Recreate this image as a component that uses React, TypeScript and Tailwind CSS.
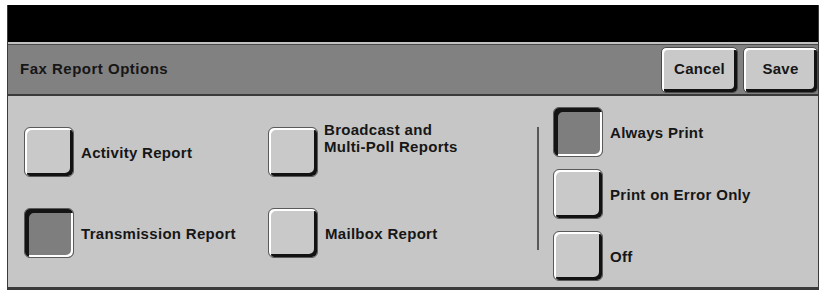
import React from "react";

const font = "font-['Liberation_Sans',Arial,sans-serif] font-bold text-[15px] tracking-[0.3px] text-[#161616]";

function Btn({ selected = false }: { selected?: boolean }) {
  return selected ? (
    <div className="w-[50px] h-[50px] shrink-0 rounded-[6px] bg-[#7e7e7e] border border-[#5a5a5a] shadow-[inset_4px_4px_0_#141414,inset_-2px_-2px_0_#ffffff]" />
  ) : (
    <div className="w-[50px] h-[50px] shrink-0 rounded-[6px] bg-[#c9c9c9] border border-[#5a5a5a] shadow-[inset_2px_2px_0_#ffffff,inset_-3px_-3px_0_#121212]" />
  );
}

function Option({ label, selected = false, children }: { label?: string; selected?: boolean; children?: React.ReactNode }) {
  return (
    <div className="flex items-center h-[50px]">
      <Btn selected={selected} />
      <div className={`${font} ml-[7px] leading-[17px]`}>{children ?? label}</div>
    </div>
  );
}

export default function App() {
  return (
    <div className="w-[823px] h-[293px] bg-white pl-[7px] pt-[5px]">
      <div className="w-[812px] h-[285px] flex flex-col border-x border-[#3a3a3a]">
        <div className="h-[37px] bg-black" />
        <div className="h-[2px] bg-[#c2c2c2]" />
        <div className="h-[1px] bg-[#4a4a4a]" />
        <div className="h-[49px] bg-[#818181] flex items-center justify-between pl-[12px] pr-0">
          <div className={`${font} text-[#1e1e1e] tracking-[0.5px]`}>Fax Report Options</div>
          <div className="flex gap-[5px]">
            <div className={`${font} w-[77px] h-[46px] rounded-[5px] bg-[#c9c9c9] border border-[#4a4a4a] shadow-[inset_2px_2px_0_#ffffff,inset_-3px_-3px_0_#121212] flex items-center justify-center`}>Cancel</div>
            <div className={`${font} w-[75px] h-[46px] rounded-[5px] bg-[#c9c9c9] border border-[#4a4a4a] shadow-[inset_2px_2px_0_#ffffff,inset_-3px_-3px_0_#121212] flex items-center justify-center`}>Save</div>
          </div>
        </div>
        <div className="h-[2px] bg-[#3a3a3a]" />
        <div className="flex-1 bg-[#c6c6c6] border-b-[3px] border-[#3a3a3a] flex items-start pl-[16px]">
          <div className="grid grid-cols-[244px_269px] gap-y-[31px] mt-[31px]">
            <Option label="Activity Report" />
            <div className="flex items-start h-[50px]">
              <Btn />
              <div className={`${font} ml-[6px] leading-[17px] -mt-[6px]`}>
                Broadcast and
                <br />
                Multi-Poll Reports
              </div>
            </div>
            <Option label="Transmission Report" selected />
            <Option label="Mailbox Report" />
          </div>
          <div className="w-[2px] h-[123px] mt-[31px] bg-[#585858]" />
          <div className="flex flex-col gap-[12px] mt-[11px] ml-[14px]">
            <Option label="Always Print" selected />
            <Option label="Print on Error Only" />
            <Option label="Off" />
          </div>
        </div>
      </div>
    </div>
  );
}
